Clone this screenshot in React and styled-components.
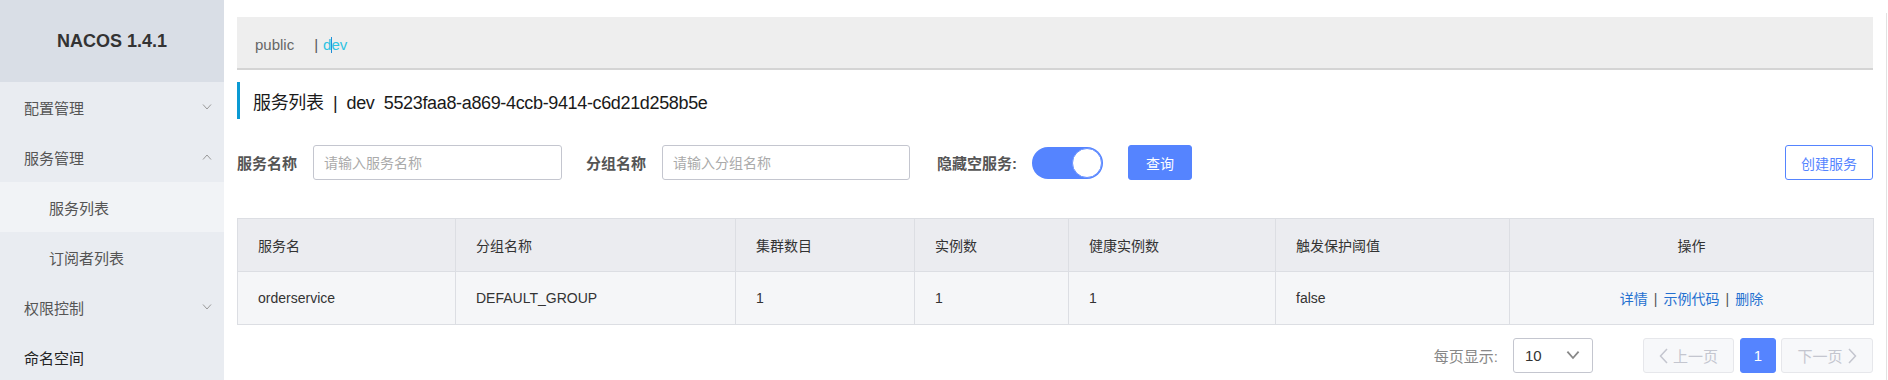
import React from 'react'
import styled, { createGlobalStyle } from 'styled-components'

const GlobalStyle = createGlobalStyle`
  html, body {
    margin: 0;
    padding: 0;
    background: #fff;
  }
  body {
    font-family: "Liberation Sans", "Noto Sans CJK SC", sans-serif;
    font-size: 14px;
    color: #333;
  }
  * {
    box-sizing: border-box;
  }
`

const Shell = styled.div`
  display: flex;
  min-height: 100vh;
  background: #fff;
`

const Sidebar = styled.aside`
  width: 224px;
  flex-shrink: 0;
  background: #e9ecf1;
`

const Brand = styled.div`
  height: 82px;
  background: #d9dee6;
  display: flex;
  align-items: center;
  justify-content: center;
  font-size: 18px;
  font-weight: 700;
  color: #333;
`

const MenuItem = styled.div`
  height: 50px;
  display: flex;
  align-items: center;
  justify-content: space-between;
  padding: 0 12px 0 ${(p) => (p.$sub ? '49px' : '24px')};
  font-size: 15px;
  color: ${(p) => (p.$dark ? '#222' : '#555')};
  background: ${(p) => (p.$active ? '#f1f3f6' : 'transparent')};
`

const Main = styled.main`
  flex: 1;
  min-width: 0;
  padding: 17px 13px 0 13px;
  display: flex;
  flex-direction: column;
`

const Edge = styled.div`
  width: 2px;
  margin-top: 13px;
  border-left: 1px solid #e2e2e2;
`

const Crumbs = styled.div`
  height: 53px;
  background: #eeeeee;
  border-bottom: 2px solid #d4d4d4;
  display: flex;
  align-items: center;
  padding: 4px 0 0 18px;
  font-size: 15px;
  color: #666;
`

const Sep = styled.span`
  margin: 0 5px 0 20px;
  color: #555;
`

const CurrentNs = styled.span`
  color: #2ec3e2;
`

const Caret = styled.span`
  display: inline-block;
  width: 1px;
  height: 16px;
  vertical-align: -3px;
  background: #1d8fd8;
  margin-right: -1px;
`

const Title = styled.h2`
  margin: 12px 0 0;
  height: 37px;
  display: flex;
  align-items: center;
  border-left: 3px solid #0b9ad3;
  padding-left: 13px;
  font-size: 18px;
  font-weight: 400;
  letter-spacing: -0.35px;
  color: #1a1a1a;
  white-space: pre;
`

const Filters = styled.div`
  margin-top: 26px;
  height: 35px;
  display: flex;
  align-items: center;
`

const Label = styled.label`
  font-size: 15px;
  font-weight: 700;
  color: #555;
  margin-left: ${(p) => p.$gap || '0'};
  margin-right: ${(p) => p.$after || '16px'};
`

const Input = styled.input`
  width: ${(p) => p.$w || '249px'};
  height: 35px;
  border: 1px solid #c4c6cf;
  border-radius: 3px;
  padding: 0 10px;
  font-family: inherit;
  font-size: 14px;
  color: #333;
  outline: none;
  &::placeholder {
    color: #aaa;
  }
`

const Switch = styled.span`
  width: 71px;
  height: 32px;
  border-radius: 16px;
  background: #5584ff;
  display: flex;
  align-items: center;
  justify-content: flex-end;
  padding-right: 1px;
`

const Knob = styled.span`
  width: 30px;
  height: 30px;
  border-radius: 50%;
  background: #fff;
  border: 1px solid #6a93ff;
`

const Button = styled.button`
  height: 35px;
  padding: 0 ${(p) => (p.$ghost ? '15px' : '17px')};
  margin-left: ${(p) => p.$ml || '0'};
  border-radius: 3px;
  border: 1px solid #5584ff;
  background: ${(p) => (p.$ghost ? '#fff' : '#5584ff')};
  color: ${(p) => (p.$ghost ? '#5584ff' : '#fff')};
  font-family: inherit;
  font-size: 14px;
  cursor: pointer;
`

const Table = styled.table`
  margin-top: 38px;
  width: 100%;
  border-collapse: collapse;
  table-layout: fixed;
  border: 1px solid #dcdee3;
  font-size: 14px;
`

const Th = styled.th`
  height: 53px;
  background: #ebecf0;
  border: 1px solid #dcdee3;
  font-weight: 400;
  color: #333;
  text-align: ${(p) => (p.$center ? 'center' : 'left')};
  padding: 0 20px;
`

const Td = styled.td`
  height: 53px;
  background: #f5f6f8;
  border: 1px solid #dcdee3;
  color: #333;
  text-align: ${(p) => (p.$center ? 'center' : 'left')};
  padding: 0 20px;
`

const Link = styled.a`
  color: #2470d0;
  text-decoration: none;
`

const Bar = styled.span`
  color: #555;
  margin: 0 6px;
`

const Pager = styled.div`
  margin-top: 13px;
  display: flex;
  justify-content: flex-end;
  align-items: center;
`

const PageLabel = styled.span`
  font-size: 15px;
  color: #888;
  margin-right: 15px;
`

const Select = styled.div`
  width: 80px;
  height: 35px;
  border: 1px solid #c4c6cf;
  border-radius: 3px;
  display: flex;
  align-items: center;
  justify-content: space-between;
  padding: 0 12px 0 11px;
  font-size: 15px;
  color: #333;
  margin-right: 50px;
`

const PageBtn = styled.div`
  height: 35px;
  width: ${(p) => p.$w || '92px'};
  margin-left: ${(p) => p.$ml || '0'};
  border-radius: 3px;
  border: 1px solid ${(p) => (p.$current ? '#5584ff' : '#e6e7eb')};
  background: ${(p) => (p.$current ? '#5584ff' : '#f7f8fa')};
  color: ${(p) => (p.$current ? '#fff' : '#c4c6cf')};
  display: flex;
  align-items: center;
  justify-content: center;
  gap: 5px;
  font-size: 15px;
`

const Chevron = ({ up, size = 10, color = '#999', stroke = 1 }) => (
  <svg width={size} height={size * 0.6} viewBox="0 0 10 6" fill="none">
    <path
      d={up ? 'M1 5.5 L5 1 L9 5.5' : 'M1 0.5 L5 5 L9 0.5'}
      stroke={color}
      strokeWidth={stroke}
    />
  </svg>
)

const Side = ({ dir }) => (
  <svg width="9" height="16" viewBox="0 0 9 16" fill="none">
    <path
      d={dir === 'left' ? 'M8 1 L1.5 8 L8 15' : 'M1 1 L7.5 8 L1 15'}
      stroke="#c4c6cf"
      strokeWidth="1.5"
    />
  </svg>
)

const columns = [
  { title: '服务名', width: 218 },
  { title: '分组名称', width: 280 },
  { title: '集群数目', width: 179 },
  { title: '实例数', width: 154 },
  { title: '健康实例数', width: 207 },
  { title: '触发保护阈值', width: 234 },
  { title: '操作', width: 364, center: true },
]

const rows = [
  { name: 'orderservice', group: 'DEFAULT_GROUP', clusters: 1, instances: 1, healthy: 1, threshold: 'false' },
]

const App = () => {
  return (
    <>
      <GlobalStyle />
      <Shell>
        <Sidebar>
          <Brand>NACOS 1.4.1</Brand>
          <MenuItem>配置管理<Chevron /></MenuItem>
          <MenuItem>服务管理<Chevron up /></MenuItem>
          <MenuItem $sub $active>服务列表</MenuItem>
          <MenuItem $sub>订阅者列表</MenuItem>
          <MenuItem>权限控制<Chevron /></MenuItem>
          <MenuItem $dark>命名空间</MenuItem>
        </Sidebar>

        <Main>
          <Crumbs>
            <span>public</span>
            <Sep>|</Sep>
            <CurrentNs>d<Caret />ev</CurrentNs>
          </Crumbs>

          <Title>服务列表  |  dev  5523faa8-a869-4ccb-9414-c6d21d258b5e</Title>

          <Filters>
            <Label>服务名称</Label>
            <Input placeholder="请输入服务名称" />
            <Label $gap="24px">分组名称</Label>
            <Input $w="248px" placeholder="请输入分组名称" />
            <Label $gap="27px" $after="15px">隐藏空服务:</Label>
            <Switch><Knob /></Switch>
            <Button $ml="25px">查询</Button>
            <Button $ghost $ml="auto">创建服务</Button>
          </Filters>

          <Table>
            <colgroup>
              {columns.map((c) => <col key={c.title} style={{ width: c.width }} />)}
            </colgroup>
            <thead>
              <tr>
                {columns.map((c) => <Th key={c.title} $center={c.center}>{c.title}</Th>)}
              </tr>
            </thead>
            <tbody>
              {rows.map((r) => (
                <tr key={r.name}>
                  <Td>{r.name}</Td>
                  <Td>{r.group}</Td>
                  <Td>{r.clusters}</Td>
                  <Td>{r.instances}</Td>
                  <Td>{r.healthy}</Td>
                  <Td>{r.threshold}</Td>
                  <Td $center>
                    <Link href="#">详情</Link>
                    <Bar>|</Bar>
                    <Link href="#">示例代码</Link>
                    <Bar>|</Bar>
                    <Link href="#">删除</Link>
                  </Td>
                </tr>
              ))}
            </tbody>
          </Table>

          <Pager>
            <PageLabel>每页显示:</PageLabel>
            <Select>
              10
              <Chevron size={14} color="#888" stroke={1.3} />
            </Select>
            <PageBtn $w="91px"><Side dir="left" />上一页</PageBtn>
            <PageBtn $w="36px" $ml="6px" $current>1</PageBtn>
            <PageBtn $ml="5px">下一页<Side dir="right" /></PageBtn>
          </Pager>
        </Main>
        <Edge />
      </Shell>
    </>
  )
}

export default App
